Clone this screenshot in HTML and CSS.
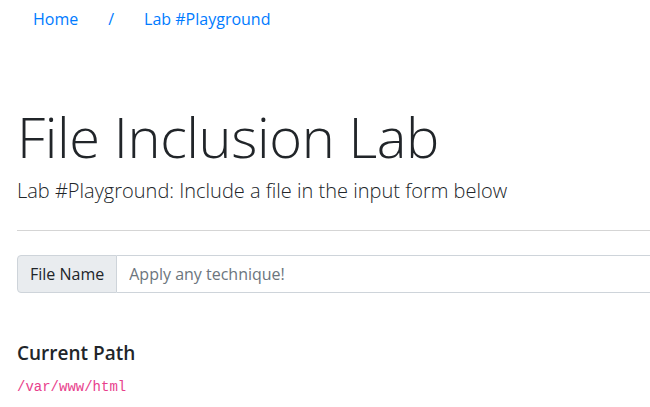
FILE: index.html
```html
<!DOCTYPE html>
<html>
<head>
<meta charset="utf-8">
<link rel="stylesheet" href="styles.css">
</head>
<body>
<nav class="crumbs">
  <a href="#">Home</a>
  <span class="sep">/</span>
  <a href="#">Lab #Playground</a>
</nav>
<main class="page">
  <h1 class="title">File Inclusion Lab</h1>
  <p class="lead">Lab #Playground: Include a file in the input form below</p>
  <hr class="rule">
  <div class="group">
    <span class="label">File Name</span>
    <input class="field" type="text" placeholder="Apply any technique!">
  </div>
  <h5 class="sub">Current Path</h5>
  <code class="path">/var/www/html</code>
</main>
</body>
</html>
```
FILE: styles.css
```css
html, body { margin: 0; padding: 0; background: #fff; }
body {
  font-family: "Open Sans", "Noto Sans", sans-serif;
  color: #212529;
  width: 680px;
  overflow: hidden;
}
.crumbs {
  display: flex;
  align-items: center;
  height: 38px;
  padding-left: 33px;
  font-size: 16px;
}
.crumbs a { color: #007bff; text-decoration: none; }
.crumbs .sep { color: #007bff; margin: 0 30px; }
.page { padding: 0 0 0 17px; }
.title {
  margin: 65px 0 0;
  font-size: 56px;
  font-weight: 300;
  line-height: 1.2;
  letter-spacing: -0.4px;
}
.lead {
  margin: 6px 0 0;
  font-size: 20px;
  font-weight: 300;
  line-height: 1.5;
}
.rule {
  margin: 24px 0 0;
  border: 0;
  border-top: 1px solid #d5d5d5;
}
.group {
  display: flex;
  margin-top: 24px;
  height: 38px;
}
.label {
  display: flex;
  align-items: center;
  padding: 0 12px;
  background: #e9ecef;
  border: 1px solid #ced4da;
  border-radius: 4px 0 0 4px;
  font-size: 16px;
  color: #212529;
}
.field {
  flex: 1;
  border: 1px solid #ced4da;
  border-left: 0;
  padding: 0 12px;
  font-family: inherit;
  font-size: 16px;
  outline: none;
}
.field::placeholder { color: #6c757d; }
.sub {
  margin: 49px 0 0;
  font-size: 19px;
  font-weight: 600;
  line-height: 1.2;
}
.path {
  display: block;
  margin-top: 14px;
  font-family: "Liberation Mono", monospace;
  font-size: 14px;
  color: #e83e8c;
}
```
